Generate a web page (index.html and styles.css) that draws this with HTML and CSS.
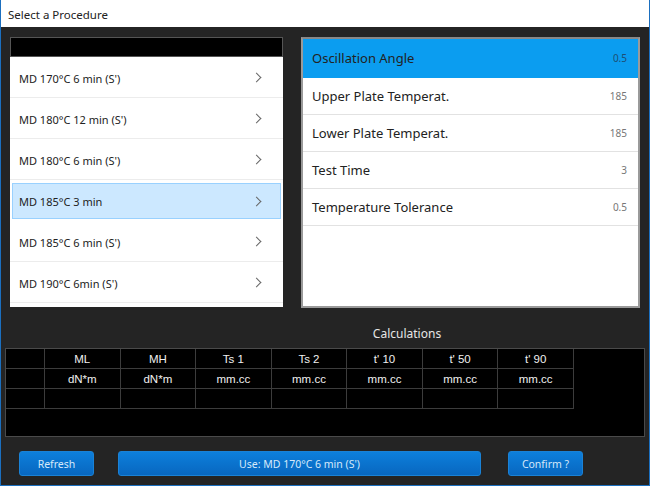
FILE: index.html
```html
<!DOCTYPE html>
<html lang="en">
<head>
    <meta charset="UTF-8">
    <title>Select a Procedure</title>
    <link rel="stylesheet" href="styles.css">
</head>
<body>
    <div class="window">
        <div class="title-bar">Select a Procedure</div>

        <div class="content">
            <div class="panels">
                <div class="procedures">
                    <div class="search-bar"></div>
                    <ul class="procedure-list">
                        <li class="procedure">MD 170°C 6 min (S')<span class="chevron"></span></li>
                        <li class="procedure">MD 180°C 12 min (S')<span class="chevron"></span></li>
                        <li class="procedure">MD 180°C 6 min (S')<span class="chevron"></span></li>
                        <li class="procedure selected">MD 185°C 3 min<span class="chevron"></span></li>
                        <li class="procedure">MD 185°C 6 min (S')<span class="chevron"></span></li>
                        <li class="procedure">MD 190°C 6min (S')<span class="chevron"></span></li>
                    </ul>
                </div>

                <div class="parameters">
                    <div class="param active"><span>Oscillation Angle</span><span class="value">0.5</span></div>
                    <div class="param"><span>Upper Plate Temperat.</span><span class="value">185</span></div>
                    <div class="param"><span>Lower Plate Temperat.</span><span class="value">185</span></div>
                    <div class="param"><span>Test Time</span><span class="value">3</span></div>
                    <div class="param"><span>Temperature Tolerance</span><span class="value">0.5</span></div>
                </div>
            </div>

            <div class="calc-title">Calculations</div>

            <div class="calc-box">
                <table class="calc-table">
                    <tr>
                        <td class="first"></td>
                        <td>ML</td><td>MH</td><td>Ts 1</td><td>Ts 2</td><td>t' 10</td><td>t' 50</td><td>t' 90</td>
                    </tr>
                    <tr>
                        <td class="first"></td>
                        <td>dN*m</td><td>dN*m</td><td>mm.cc</td><td>mm.cc</td><td>mm.cc</td><td>mm.cc</td><td>mm.cc</td>
                    </tr>
                    <tr>
                        <td class="first"></td>
                        <td></td><td></td><td></td><td></td><td></td><td></td><td></td>
                    </tr>
                </table>
            </div>

            <div class="actions">
                <button class="btn refresh">Refresh</button>
                <button class="btn use">Use: MD 170°C 6 min (S')</button>
                <button class="btn confirm">Confirm ?</button>
            </div>
        </div>
    </div>
</body>
</html>
```

FILE: styles.css
```css
html, body {
    margin: 0;
    padding: 0;
}
body {
    width: 650px;
    height: 486px;
    overflow: hidden;
    font-family: 'Noto Sans', 'Open Sans', sans-serif;
}
.window {
    box-sizing: border-box;
    width: 650px;
    height: 486px;
    border: 1px solid #1b6fbf;
    border-top: none;
    background-color: #242424;
    display: flex;
    flex-direction: column;
}
.title-bar {
    height: 27px;
    line-height: 29px;
    background-color: #fff;
    color: #222;
    font-size: 11.5px;
    padding-left: 7px;
    flex-shrink: 0;
}
.content {
    flex: 1;
    display: flex;
    flex-direction: column;
}
.panels {
    display: flex;
    gap: 18px;
    padding: 10px 0 0 9px;
    height: 270px;
}
.procedures {
    width: 273px;
    display: flex;
    flex-direction: column;
}
.search-bar {
    height: 18px;
    background-color: #000;
    border: 1px solid #555;
}
.procedure-list {
    list-style: none;
    margin: 0;
    padding: 0;
    background-color: #fff;
    height: 250px;
    overflow: hidden;
}
.procedure {
    position: relative;
    box-sizing: border-box;
    height: 41px;
    line-height: 37px;
    padding: 3px 0 0 9px;
    font-size: 11px;
    color: #222;
    border-bottom: 1px solid #ececec;
}
.procedure.selected {
    background-color: #cce8ff;
    border: 1px solid #99d1ff;
    margin: 3px 2px 2px 2px;
    height: 36px;
    line-height: 32px;
    padding: 2px 0 0 6px;
}
.chevron {
    position: absolute;
    right: 23px;
    top: 17px;
    width: 6px;
    height: 6px;
    border-top: 1.2px solid #666;
    border-right: 1.2px solid #666;
    transform: rotate(45deg);
}
.procedure.selected .chevron {
    right: 20px;
    top: 14px;
}
.parameters {
    box-sizing: border-box;
    width: 339px;
    height: 271px;
    background-color: #fff;
    border: 2px solid #9a9a9a;
    border-top-color: #888;
}
.param {
    display: flex;
    justify-content: space-between;
    align-items: center;
    height: 37px;
    box-sizing: border-box;
    padding: 0 11px 0 9px;
    font-size: 13px;
    color: #222;
    border-bottom: 1px solid #e2e2e2;
}
.param .value {
    font-size: 10px;
    color: #777;
}
.param.active {
    height: 39px;
    background-color: #0b9df0;
    border-bottom-color: #0b9df0;
}
.param.active .value {
    color: #1d4f75;
}
.calc-title {
    text-align: center;
    color: #e6e6e6;
    font-size: 12px;
    margin: 18px 0 0 164px;
    height: 23px;
}
.calc-box {
    box-sizing: border-box;
    margin: 0 4px 0 4px;
    height: 89px;
    background-color: #000;
    border: 1px solid #4a4a4a;
}
.calc-table {
    border-collapse: collapse;
    table-layout: fixed;
    width: 568px;
    font-family: 'Liberation Sans', Arial, sans-serif;
    font-size: 11.5px;
    color: #f0f0f0;
}
.calc-table td {
    height: 19px;
    padding: 0;
    text-align: center;
    border: 1px solid #3c3c3c;
    border-top: none;
    border-left: none;
}
.calc-table td.first {
    width: 38px;
}
.actions {
    display: flex;
    padding: 14px 0 0 18px;
}
.btn {
    height: 25px;
    border: 1px solid #1a82d6;
    border-radius: 3px;
    background: linear-gradient(#0d7fdb, #0867c0);
    color: #d6e9fa;
    font-family: 'Noto Sans', 'Open Sans', sans-serif;
    font-size: 10.5px;
    padding: 0;
}
.refresh {
    width: 75px;
}
.use {
    width: 363px;
    margin-left: 24px;
}
.confirm {
    width: 75px;
    margin-left: 27px;
}
```
